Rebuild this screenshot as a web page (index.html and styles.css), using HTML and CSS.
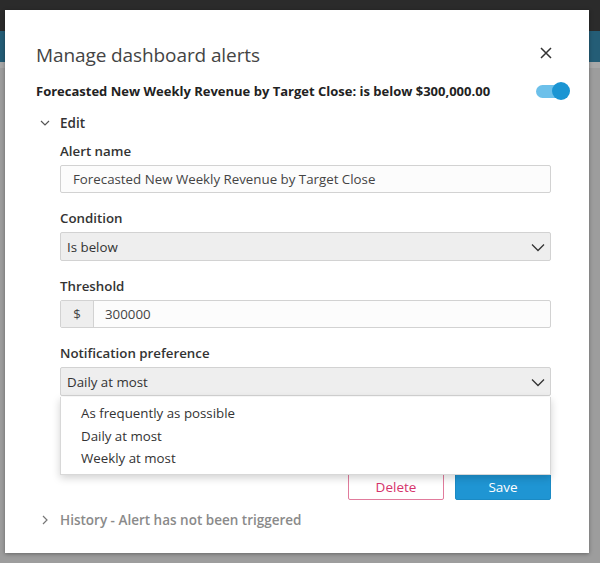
FILE: index.html
```html
<!DOCTYPE html>
<html>
<head>
<meta charset="utf-8">
<link rel="stylesheet" href="styles.css">
</head>
<body>
<div class="app">
  <div class="app-top"></div>
  <div class="app-nav"></div>
  <div class="app-body"></div>
</div>
<div class="modal">
  <div class="modal-head">
    <h1 class="title">Manage dashboard alerts</h1>
    <button class="close" aria-label="Close">
      <svg width="12" height="12" viewBox="0 0 12 12"><path d="M1 1L11 11M11 1L1 11" stroke="#333" stroke-width="1.5" fill="none"/></svg>
    </button>
  </div>
  <div class="alert-row">
    <div class="alert-summary">Forecasted New Weekly Revenue by Target Close: is below $300,000.00</div>
    <div class="toggle"><span class="knob"></span></div>
  </div>
  <div class="section-toggle">
    <svg class="chev" width="10" height="10" viewBox="0 0 10 10"><path d="M1 3L5 7L9 3" stroke="#555" stroke-width="1.2" fill="none"/></svg>
    <span class="section-label">Edit</span>
  </div>
  <div class="form">
    <div class="field">
      <label class="label">Alert name</label>
      <div class="input">Forecasted New Weekly Revenue by Target Close</div>
    </div>
    <div class="field">
      <label class="label">Condition</label>
      <div class="select">
        <span>Is below</span>
        <svg width="14" height="10" viewBox="0 0 14 10"><path d="M1 2.5L7 8.5L13 2.5" stroke="#333" stroke-width="1.3" fill="none"/></svg>
      </div>
    </div>
    <div class="field">
      <label class="label">Threshold</label>
      <div class="input-group">
        <span class="addon">$</span>
        <span class="input-inner">300000</span>
      </div>
    </div>
    <div class="field">
      <label class="label">Notification preference</label>
      <div class="select-wrap">
        <div class="select">
          <span>Daily at most</span>
          <svg width="14" height="10" viewBox="0 0 14 10"><path d="M1 2.5L7 8.5L13 2.5" stroke="#333" stroke-width="1.3" fill="none"/></svg>
        </div>
        <ul class="menu">
          <li>As frequently as possible</li>
          <li>Daily at most</li>
          <li>Weekly at most</li>
        </ul>
      </div>
    </div>
    <div class="actions">
      <button class="btn btn-delete">Delete</button>
      <button class="btn btn-save">Save</button>
    </div>
  </div>
  <div class="section-toggle history">
    <svg class="chev" width="10" height="10" viewBox="0 0 10 10"><path d="M3 1L7 5L3 9" stroke="#777" stroke-width="1.2" fill="none"/></svg>
    <span class="section-label muted">History - Alert has not been triggered</span>
  </div>
</div>
</body>
</html>
```

FILE: styles.css
```css
* { box-sizing: border-box; }
html, body { margin: 0; padding: 0; }
body {
  width: 600px;
  height: 563px;
  overflow: hidden;
  position: relative;
  font-family: "Open Sans", "Noto Sans", sans-serif;
  background: #9c9c9c;
}
.app { display: flex; flex-direction: column; height: 100%; }
.app-top { height: 31px; background: #2b2b2b; }
.app-nav { height: 31px; background: #245d76; }
.app-body { flex: 1; background: #9d9d9d; border-top: 6px solid #a8a8a8; }

.modal {
  position: absolute;
  left: 5px;
  top: 10px;
  width: 584px;
  height: 543px;
  background: #fff;
  box-shadow: 0 1px 4px rgba(0,0,0,0.35);
  padding: 31px 38px 0 31px;
  display: flex;
  flex-direction: column;
}
.modal-head {
  display: flex;
  align-items: center;
  justify-content: space-between;
  height: 28px;
}
.title {
  margin: 0;
  font-size: 19px;
  font-weight: 400;
  color: #444;
  letter-spacing: -0.1px;
}
.close {
  border: 0;
  background: none;
  padding: 0;
  width: 12px;
  height: 12px;
  margin-right: -1px;
  margin-top: -4px;
  display: flex;
}
.alert-row {
  display: flex;
  align-items: center;
  justify-content: space-between;
  margin-top: 11px;
  height: 22px;
  margin-right: -19px;
}
.alert-summary {
  font-size: 13px;
  font-weight: 700;
  color: #222;
}
.toggle {
  position: relative;
  width: 34px;
  height: 18px;
  display: flex;
  align-items: center;
}
.toggle::before {
  content: "";
  width: 28px;
  height: 13px;
  border-radius: 7px;
  background: #6cc0ea;
}
.knob {
  position: absolute;
  right: 0;
  top: 0;
  width: 18px;
  height: 18px;
  border-radius: 50%;
  background: #1b95d3;
}
.section-toggle {
  display: flex;
  align-items: center;
  margin-top: 11px;
  height: 20px;
}
.chev { margin-left: 4px; margin-right: 10px; }
.section-label {
  font-size: 13.5px;
  font-weight: 600;
  color: #333;
}
.section-label.muted { color: #8a8a8a; }
.form {
  padding-left: 24px;
  display: flex;
  flex-direction: column;
  margin-top: 9px;
}
.field { display: flex; flex-direction: column; margin-bottom: 16px; }
.label {
  font-size: 13.3px;
  font-weight: 600;
  color: #333;
  height: 18px;
  line-height: 18px;
  margin-bottom: 5px;
}
.input {
  height: 28px;
  border: 1px solid #d2d2d2;
  border-radius: 2px;
  background: #fcfcfc;
  font-size: 13.3px;
  color: #444;
  padding: 0 12px;
  display: flex;
  align-items: center;
}
.select {
  height: 29px;
  border: 1px solid #d2d2d2;
  border-radius: 2px;
  background: #eeeeee;
  font-size: 13.3px;
  color: #333;
  padding: 0 5px 0 6px;
  display: flex;
  align-items: center;
  justify-content: space-between;
}
.input-group {
  height: 28px;
  display: flex;
  border: 1px solid #d2d2d2;
  border-radius: 2px;
  background: #fcfcfc;
  font-size: 13.3px;
  color: #444;
}
.addon {
  width: 33px;
  background: #eeeeee;
  border-right: 1px solid #d2d2d2;
  display: flex;
  align-items: center;
  justify-content: center;
}
.input-inner {
  display: flex;
  align-items: center;
  padding-left: 11px;
}
.select-wrap { position: relative; }
.menu {
  position: absolute;
  left: 0;
  right: 0;
  top: 30px;
  margin: 0;
  padding: 5px 0 4px 0;
  list-style: none;
  background: #fff;
  border: 1px solid #d8d8d8;
  border-top: 0;
  box-shadow: 0 3px 8px rgba(0,0,0,0.18);
  z-index: 2;
}
.menu li {
  font-size: 13.3px;
  color: #333;
  padding: 0 20px;
  height: 22.5px;
  line-height: 22.5px;
}
.actions {
  display: flex;
  justify-content: flex-end;
  gap: 11px;
  margin-top: 61px;
}
.btn {
  width: 96px;
  height: 27px;
  font-family: inherit;
  font-size: 13.5px;
  font-weight: 500;
  border-radius: 2px;
  padding: 0;
}
.btn-delete {
  background: #fff;
  border: 1px solid #e17b9c;
  color: #d6336c;
}
.btn-save {
  background: #1f95d3;
  border: 1px solid #1b8ac4;
  color: #fff;
}
.history { margin-top: 10px; }
```
